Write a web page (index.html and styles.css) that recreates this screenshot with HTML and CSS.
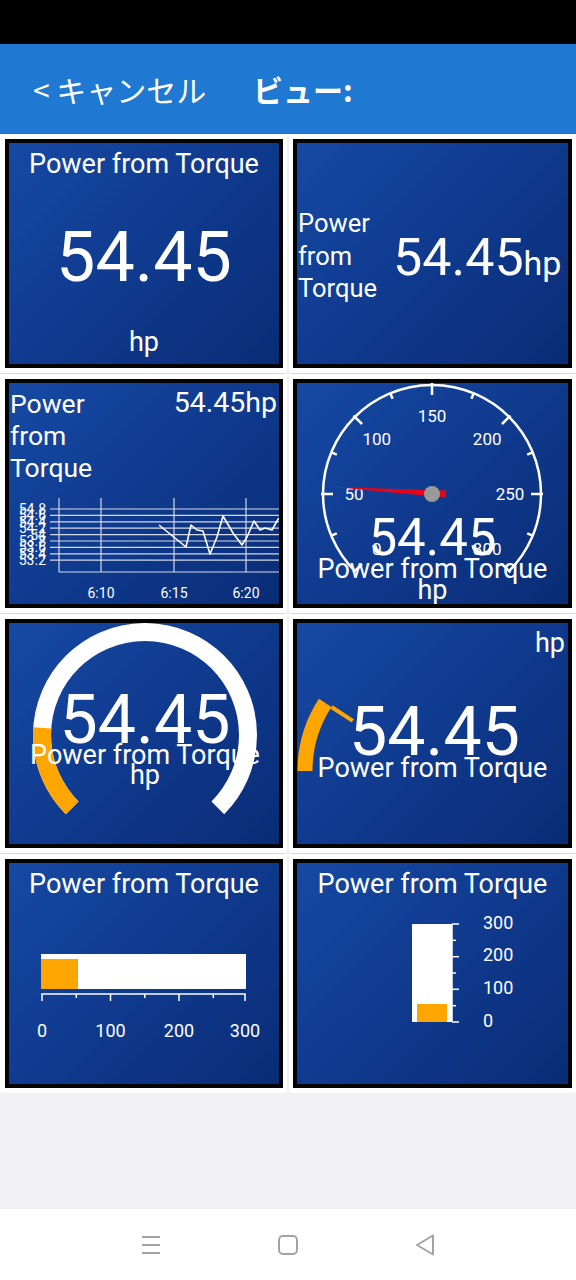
FILE: index.html
```html
<!DOCTYPE html>
<html lang="ja">
<head>
<meta charset="utf-8">
<title>ビュー</title>
<link rel="stylesheet" href="styles.css">
</head>
<body>
<div class="statusbar"></div>
<header class="topbar">
  <span class="cancel">&lt; キャンセル</span>
  <span class="title">ビュー:</span>
</header>
<main class="grid">
  <!-- 1: digital -->
  <div class="cell">
    <div class="tile digital">
      <div class="d-title">Power from Torque</div>
      <div class="d-value">54.45</div>
      <div class="d-unit">hp</div>
    </div>
  </div>
  <!-- 2: inline -->
  <div class="cell">
    <div class="tile inline">
      <div class="il-label">Power from Torque</div>
      <div class="il-value">54.45<span class="il-unit">hp</span></div>
    </div>
  </div>
  <!-- 3: chart -->
  <div class="cell">
    <div class="tile chart">
      <div class="ch-head">
        <div class="ch-label">Power from Torque</div>
        <div class="ch-value">54.45hp</div>
      </div>
      <svg class="ch-svg" viewBox="0 101 270 120" width="270" height="120">
        <g class="gridlines">
          <line x1="41" y1="126" x2="270" y2="126"/>
          <line x1="41" y1="132.4" x2="270" y2="132.4"/>
          <line x1="41" y1="138.8" x2="270" y2="138.8"/>
          <line x1="41" y1="145.2" x2="270" y2="145.2"/>
          <line x1="41" y1="151.6" x2="270" y2="151.6"/>
          <line x1="41" y1="158" x2="270" y2="158"/>
          <line x1="41" y1="164.4" x2="270" y2="164.4"/>
          <line x1="41" y1="170.8" x2="270" y2="170.8"/>
          <line x1="41" y1="177.2" x2="270" y2="177.2"/>
          <line x1="50" y1="115" x2="50" y2="189"/>
          <line x1="50" y1="189" x2="270" y2="189"/>
          <line x1="92" y1="115" x2="92" y2="189"/>
          <line x1="165" y1="115" x2="165" y2="189"/>
          <line x1="237" y1="115" x2="237" y2="189"/>
        </g>
        <g class="ylabels">
          <text x="37" y="131">54.8</text>
          <text x="37" y="137.4">54.6</text>
          <text x="37" y="143.8">54.4</text>
          <text x="37" y="150.2">54.2</text>
          <text x="37" y="156.6">54</text>
          <text x="37" y="163">53.8</text>
          <text x="37" y="169.4">53.6</text>
          <text x="37" y="175.8">53.4</text>
          <text x="37" y="182.2">53.2</text>
        </g>
        <g class="xlabels">
          <text x="92" y="215">6:10</text>
          <text x="165" y="215">6:15</text>
          <text x="237" y="215">6:20</text>
        </g>
        <polyline class="series" points="150,142 177,164 182,142 188,147 194,148 201,171 208,154 214,133 224,150 233,162 238,154 245,138 251,147 256,145 263,147 268,138 270,135"/>
      </svg>
    </div>
  </div>
  <!-- 4: speedometer -->
  <div class="cell">
    <div class="tile speedo">
      <svg class="layer" viewBox="0 0 271 221" width="271" height="221">
        <path class="dial" d="M 57.93 188.07 A 109 109 0 1 1 212.07 188.07"/>
        <g class="ticks">
          <line x1="135" y1="0" x2="135" y2="12" transform="rotate(-135 135 111)"/>
          <line x1="135" y1="2" x2="135" y2="8" transform="rotate(-112.5 135 111)"/>
          <line x1="135" y1="0" x2="135" y2="12" transform="rotate(-90 135 111)"/>
          <line x1="135" y1="2" x2="135" y2="8" transform="rotate(-67.5 135 111)"/>
          <line x1="135" y1="0" x2="135" y2="12" transform="rotate(-45 135 111)"/>
          <line x1="135" y1="2" x2="135" y2="8" transform="rotate(-22.5 135 111)"/>
          <line x1="135" y1="0" x2="135" y2="12"/>
          <line x1="135" y1="2" x2="135" y2="8" transform="rotate(22.5 135 111)"/>
          <line x1="135" y1="0" x2="135" y2="12" transform="rotate(45 135 111)"/>
          <line x1="135" y1="2" x2="135" y2="8" transform="rotate(67.5 135 111)"/>
          <line x1="135" y1="0" x2="135" y2="12" transform="rotate(90 135 111)"/>
          <line x1="135" y1="2" x2="135" y2="8" transform="rotate(112.5 135 111)"/>
          <line x1="135" y1="0" x2="135" y2="12" transform="rotate(135 135 111)"/>
        </g>
        <g class="dial-labels">
          <text x="79.8" y="172.2">0</text>
          <text x="57" y="117">50</text>
          <text x="79.8" y="61.8">100</text>
          <text x="135" y="39">150</text>
          <text x="190.2" y="61.8">200</text>
          <text x="213" y="117">250</text>
          <text x="190.2" y="172.2">300</text>
        </g>
        <polygon class="needle" points="36.2,104.1 149.2,107.5 148.8,114.5"/>
        <circle class="hub" cx="135" cy="111" r="8"/>
      </svg>
      <div class="s-stack">
        <div class="s-value">54.45</div>
        <div class="s-label">Power from Torque</div>
        <div class="s-unit">hp</div>
      </div>
    </div>
  </div>
  <!-- 5: ring gauge -->
  <div class="cell">
    <div class="tile ring">
      <svg class="layer" viewBox="0 0 270 221" width="270" height="221">
        <path class="ring-bg" d="M 63.17 184.83 A 103 103 0 1 1 208.83 184.83"/>
        <path class="ring-fg" d="M 63.17 184.83 A 103 103 0 0 1 33.25 104.81"/>
      </svg>
      <div class="r-stack">
        <div class="r-value">54.45</div>
        <div class="r-label">Power from Torque</div>
        <div class="r-unit">hp</div>
      </div>
    </div>
  </div>
  <!-- 6: half arc -->
  <div class="cell">
    <div class="tile halfarc">
      <svg class="layer" viewBox="0 0 271 221" width="271" height="221">
        <path class="arc-fg" d="M 8 148 A 125 125 0 0 1 28.17 79.92"/>
        <line class="arc-ptr" x1="34.5" y1="84" x2="55.8" y2="97.9"/>
      </svg>
      <div class="a-stack">
        <div class="a-unit">hp</div>
        <div class="a-value">54.45</div>
        <div class="a-label">Power from Torque</div>
      </div>
    </div>
  </div>
  <!-- 7: horizontal bar -->
  <div class="cell">
    <div class="tile hbar">
      <div class="d-title">Power from Torque</div>
      <svg class="bar-svg" viewBox="0 36 270 185" width="270" height="185">
        <rect class="bar-bg" x="32" y="91" width="205" height="35"/>
        <rect class="bar-fg" x="32" y="96" width="37" height="30"/>
        <g class="axis">
          <line x1="32.3" y1="131" x2="236.7" y2="131"/>
          <line x1="33" y1="131" x2="33" y2="138"/>
          <line x1="101.5" y1="131" x2="101.5" y2="138"/>
          <line x1="170" y1="131" x2="170" y2="138"/>
          <line x1="236" y1="131" x2="236" y2="138"/>
          <line x1="67.3" y1="131" x2="67.3" y2="135"/>
          <line x1="135.8" y1="131" x2="135.8" y2="135"/>
          <line x1="204.3" y1="131" x2="204.3" y2="135"/>
        </g>
        <g class="bar-labels mid">
          <text x="33" y="174">0</text>
          <text x="101.5" y="174">100</text>
          <text x="170" y="174">200</text>
          <text x="236" y="174">300</text>
        </g>
      </svg>
    </div>
  </div>
  <!-- 8: vertical bar -->
  <div class="cell">
    <div class="tile vbar">
      <div class="d-title">Power from Torque</div>
      <svg class="bar-svg" viewBox="0 36 271 185" width="271" height="185">
        <rect class="bar-bg" x="115" y="61" width="40" height="98"/>
        <rect class="bar-fg" x="120" y="141" width="30" height="18"/>
        <g class="axis">
          <line x1="155" y1="61" x2="155" y2="159"/>
          <line x1="155" y1="61" x2="162" y2="61"/>
          <line x1="155" y1="93.7" x2="162" y2="93.7"/>
          <line x1="155" y1="126.3" x2="162" y2="126.3"/>
          <line x1="155" y1="159" x2="162" y2="159"/>
          <line x1="155" y1="77.3" x2="159" y2="77.3"/>
          <line x1="155" y1="110" x2="159" y2="110"/>
          <line x1="155" y1="142.7" x2="159" y2="142.7"/>
        </g>
        <g class="bar-labels">
          <text x="186" y="65.5">300</text>
          <text x="186" y="98.2">200</text>
          <text x="186" y="130.8">100</text>
          <text x="186" y="163.5">0</text>
        </g>
      </svg>
    </div>
  </div>
</main>
<div class="filler"></div>
<nav class="navbar">
  <svg class="nav-icon" viewBox="0 0 22 22" width="22" height="22">
    <path d="M2 3h18M2 11h18M2 19h18"/>
  </svg>
  <svg class="nav-icon" viewBox="0 0 22 22" width="22" height="22">
    <rect x="2" y="2" width="18" height="18" rx="4"/>
  </svg>
  <svg class="nav-icon" viewBox="0 0 22 22" width="22" height="22">
    <path d="M19 1.5L3 11l16 9.5z" stroke-linejoin="round"/>
  </svg>
</nav>
</body>
</html>
```
FILE: styles.css
```css
* { box-sizing: border-box; }
html, body { margin: 0; padding: 0; }
body {
  width: 576px;
  height: 1280px;
  display: flex;
  flex-direction: column;
  background: #f0f0f5;
  font-family: Roboto, "Noto Sans", sans-serif;
  overflow: hidden;
}
.statusbar { height: 44px; background: #000; flex: none; }
.topbar {
  height: 90px;
  flex: none;
  background: #1f78d1;
  color: #fff;
  display: flex;
  align-items: center;
  padding-left: 33px;
  font-family: "Noto Sans CJK JP", sans-serif;
  font-size: 30px;
}
.topbar .cancel { width: 220px; }
.topbar .title { font-weight: 700; }

.grid {
  flex: none;
  display: grid;
  grid-template-columns: 287px 287px;
  column-gap: 2px;
  row-gap: 1px;
  background: #fff;
}
.cell {
  background: #fff;
  padding: 5px 4px 5px 5px;
  box-shadow: 0 1px 2px rgba(0,0,0,0.2);
  border-radius: 2px;
}
.cell:nth-child(even) { padding-left: 4px; }
.tile {
  position: relative;
  height: 229px;
  border: 4px solid #030303;
  background: linear-gradient(135deg, #1649a4 0%, #0f3a8e 50%, #0a2c76 100%);
  color: #fff;
  overflow: hidden;
}
.layer { position: absolute; left: 0; top: 0; display: block; }

/* 1 digital */
.digital { display: flex; flex-direction: column; align-items: center; padding-top: 6px; }
.d-title { font-size: 27px; line-height: 30px; text-align: center; white-space: nowrap; }
.hbar, .vbar { padding-top: 6px; }
.d-value { font-size: 70px; line-height: 80px; margin-top: 38px; }
.d-unit { font-size: 27px; line-height: 30px; margin-top: 30px; }

/* 2 inline */
.inline { display: flex; align-items: center; padding-top: 5px; }
.il-label { flex: 0 0 96px; font-size: 25.5px; line-height: 32.5px; padding-left: 1px; }
.il-value { font-size: 52px; line-height: 60px; white-space: nowrap; margin-top: 4px; }
.il-unit { font-size: 34px; line-height: 34px; }

/* 3 chart */
.ch-head { display: flex; justify-content: space-between; align-items: flex-start; padding: 5px 2px 0 1px; height: 101px; }
.ch-label { width: 100px; font-size: 26.5px; line-height: 32px; }
.ch-value { font-size: 28.5px; line-height: 32px; margin-top: -1px; }
.ch-svg { display: block; }
.gridlines line { stroke: #d3d9e6; stroke-width: 1.2; }
.ylabels text { font-family: Roboto, sans-serif; font-size: 14px; fill: #fff; text-anchor: end; }
.xlabels text { font-family: Roboto, sans-serif; font-size: 14px; fill: #fff; text-anchor: middle; }
.series { fill: none; stroke: #fff; stroke-width: 1.6; stroke-linejoin: round; }

/* 4 speedometer */
.dial { fill: none; stroke: #fff; stroke-width: 2.5; }
.ticks line { stroke: #fff; stroke-width: 2.5; }
.dial-labels text { font-family: Roboto, sans-serif; font-size: 17px; fill: #fff; text-anchor: middle; }
.needle { fill: #e3061b; }
.hub { fill: #9a9a9a; }
.s-stack { position: relative; height: 100%; display: flex; flex-direction: column; justify-content: flex-end; align-items: center; padding-bottom: 4px; }
.s-value { font-size: 51px; line-height: 40px; }
.s-label { font-size: 27px; line-height: 22px; white-space: nowrap; }
.s-unit { font-size: 27px; line-height: 20px; }

/* 5 ring */
.ring-bg { fill: none; stroke: #fff; stroke-width: 18; }
.ring-fg { fill: none; stroke: #ffa500; stroke-width: 18; }
.r-stack { position: relative; display: flex; flex-direction: column; align-items: center; padding-top: 72px; padding-left: 2px; }
.r-value { font-size: 68px; line-height: 50px; }
.r-label { font-size: 27px; line-height: 20px; white-space: nowrap; }
.r-unit { font-size: 27px; line-height: 20px; }

/* 6 half arc */
.arc-fg { fill: none; stroke: #ffa500; stroke-width: 15; }
.arc-ptr { stroke: #ffa500; stroke-width: 4; }
.a-stack { position: relative; display: flex; flex-direction: column; align-items: center; }
.a-unit { align-self: flex-end; font-size: 27px; line-height: 30px; margin-top: 5px; padding-right: 3px; }
.a-value { font-size: 68px; line-height: 50px; margin-top: 48.75px; padding-left: 4px; }
.a-label { font-size: 27px; line-height: 22px; white-space: nowrap; }

/* 7, 8 bars */
.hbar, .vbar { display: flex; flex-direction: column; align-items: center; }
.bar-svg { display: block; }
.bar-bg { fill: #fff; }
.bar-fg { fill: #ffa500; }
.axis line { stroke: #fff; stroke-width: 1.5; }
.bar-labels text { font-family: Roboto, sans-serif; font-size: 18px; fill: #fff; }
.bar-labels.mid text { text-anchor: middle; }

.filler { flex: 1; background: #f0f0f5; }
.navbar {
  flex: none;
  height: 71px;
  background: #fff;
  display: flex;
  justify-content: center;
  align-items: center;
  gap: 115px;
}
.nav-icon { display: block; }
.nav-icon path, .nav-icon rect { fill: none; stroke: #a3a3a3; stroke-width: 2; }
```
